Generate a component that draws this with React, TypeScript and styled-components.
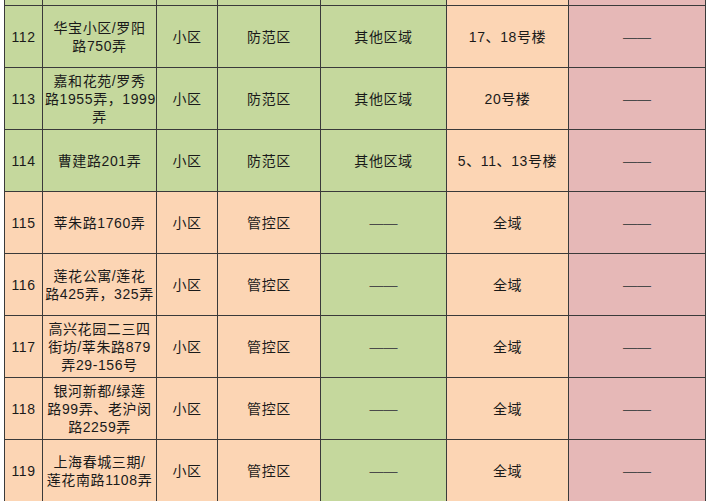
import React from "react";
import styled, { createGlobalStyle } from "styled-components";

const Global = createGlobalStyle`
  html, body { margin: 0; padding: 0; background: #ffffff; overflow: hidden; }
  body { font-family: "Liberation Sans", "Noto Sans CJK SC", sans-serif; }
`;

type Tone = "green" | "peach" | "pink";
const tones: Record<Tone, string> = {
  green: "#c5d89d",
  peach: "#fcd5b4",
  pink: "#e6b8b7",
};

const Page = styled.div`
  width: 709px;
  height: 501px;
  overflow: hidden;
  padding-left: 4px;
  box-sizing: border-box;
`;

const Table = styled.table`
  border-collapse: collapse;
  table-layout: fixed;
  width: 701px;
  margin-top: -1px;
  color: #1a1a1a;
  font-size: 14px;
  line-height: 18px;
`;

const Row = styled.tr<{ $h: number }>`
  height: ${(p) => p.$h}px;
`;

const Cell = styled.td<{ $tone: Tone }>`
  background: ${(p) => tones[p.$tone]};
  border: 1px solid #3a3a3a;
  text-align: center;
  vertical-align: middle;
  padding: 0 2px;
  letter-spacing: 0.6px;
  white-space: nowrap;
  overflow: hidden;
`;

const Dash = styled.span`
  color: #4a4a4a;
  letter-spacing: 0;
`;

type Rec = {
  no: string;
  name: string[];
  kind: string;
  zone: string;
  other: string;
  scope: string;
  front: Tone;
};

const rows: Rec[] = [
  { no: "112", name: ["华宝小区/罗阳", "路750弄"], kind: "小区", zone: "防范区", other: "其他区域", scope: "17、18号楼", front: "green" },
  { no: "113", name: ["嘉和花苑/罗秀", "路1955弄，1999", "弄"], kind: "小区", zone: "防范区", other: "其他区域", scope: "20号楼", front: "green" },
  { no: "114", name: ["曹建路201弄"], kind: "小区", zone: "防范区", other: "其他区域", scope: "5、11、13号楼", front: "green" },
  { no: "115", name: ["莘朱路1760弄"], kind: "小区", zone: "管控区", other: "——", scope: "全域", front: "peach" },
  { no: "116", name: ["莲花公寓/莲花", "路425弄，325弄"], kind: "小区", zone: "管控区", other: "——", scope: "全域", front: "peach" },
  { no: "117", name: ["高兴花园二三四", "街坊/莘朱路879", "弄29-156号"], kind: "小区", zone: "管控区", other: "——", scope: "全域", front: "peach" },
  { no: "118", name: ["银河新都/绿莲", "路99弄、老沪闵", "路2259弄"], kind: "小区", zone: "管控区", other: "——", scope: "全域", front: "peach" },
  { no: "119", name: ["上海春城三期/", "莲花南路1108弄"], kind: "小区", zone: "管控区", other: "——", scope: "全域", front: "peach" },
];

const widths = [38, 114, 61, 103, 126, 122, 137];

const Text = ({ v }: { v: string }) =>
  v === "——" ? <Dash>——</Dash> : <>{v}</>;

export default function App() {
  return (
    <>
      <Global />
      <Page>
        <Table>
          <colgroup>
            {widths.map((w, i) => (
              <col key={i} style={{ width: w }} />
            ))}
          </colgroup>
          <tbody>
            <Row $h={6}>
              {(["green", "green", "green", "green", "green", "peach", "pink"] as Tone[]).map((t, i) => (
                <Cell key={i} $tone={t} />
              ))}
            </Row>
            {rows.map((r) => (
              <Row key={r.no} $h={62}>
                <Cell $tone={r.front}>{r.no}</Cell>
                <Cell $tone={r.front}>
                  {r.name.map((l, i) => (
                    <React.Fragment key={i}>
                      {i > 0 && <br />}
                      {l}
                    </React.Fragment>
                  ))}
                </Cell>
                <Cell $tone={r.front}>{r.kind}</Cell>
                <Cell $tone={r.front}>{r.zone}</Cell>
                <Cell $tone="green"><Text v={r.other} /></Cell>
                <Cell $tone="peach">{r.scope}</Cell>
                <Cell $tone="pink"><Dash>——</Dash></Cell>
              </Row>
            ))}
          </tbody>
        </Table>
      </Page>
    </>
  );
}
